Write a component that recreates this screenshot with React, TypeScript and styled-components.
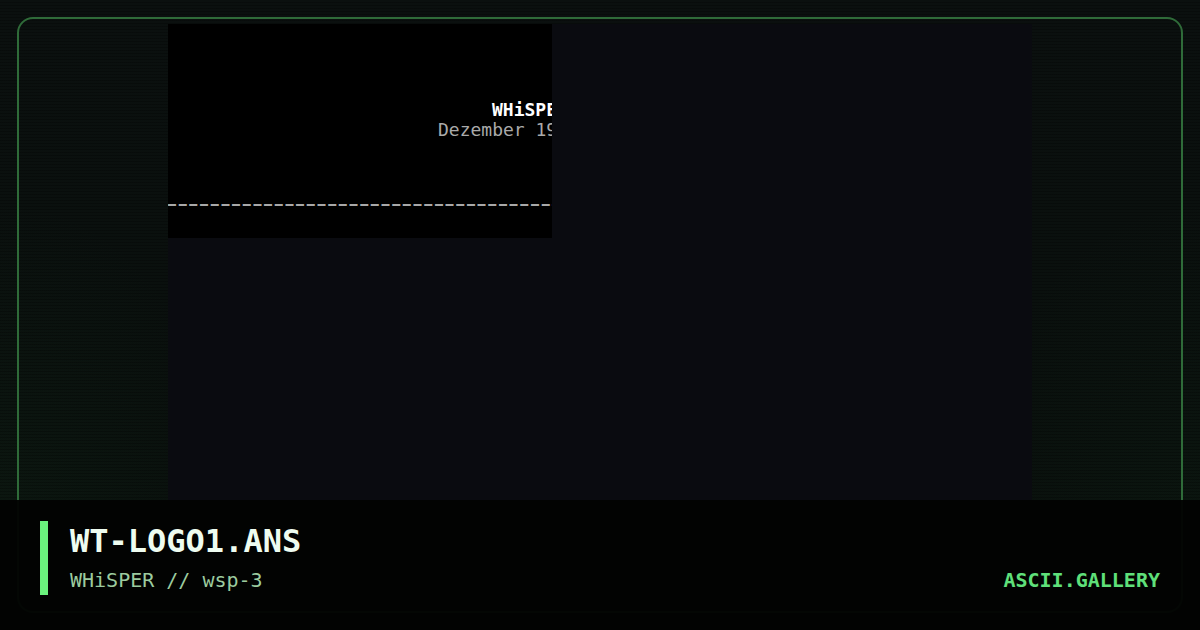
import React from "react";
import styled, { createGlobalStyle } from "styled-components";

const Global = createGlobalStyle`
  html, body { margin: 0; padding: 0; background: #090d0b; }
  * { box-sizing: border-box; }
`;

const Page = styled.div`
  position: relative;
  width: 1200px;
  height: 630px;
  overflow: hidden;
  padding: 17px;
  background:
    repeating-linear-gradient(
      to bottom,
      rgba(0, 0, 0, 0) 0px,
      rgba(0, 0, 0, 0) 2px,
      rgba(0, 0, 0, 0.25) 2px,
      rgba(0, 0, 0, 0.25) 3px
    ),
    radial-gradient(ellipse 240px 340px at 0% 85%, rgba(40, 110, 60, 0.07), rgba(40, 110, 60, 0) 100%),
    radial-gradient(ellipse 240px 340px at 100% 85%, rgba(40, 110, 60, 0.06), rgba(40, 110, 60, 0) 100%),
    linear-gradient(to bottom, #0b100f, #09100c);
  font-family: "DejaVu Sans Mono", "Liberation Mono", monospace;
`;

const Frame = styled.div`
  height: 596px;
  border: 2px solid #2f6b39;
  border-radius: 16px;
  padding-top: 5px;
  display: flex;
  flex-direction: column;
  align-items: center;
  overflow: hidden;
`;

const Viewer = styled.div`
  width: 864px;
  flex: 1;
  background: #0a0b10;
`;

const AnsiCanvas = styled.div`
  width: 384px;
  height: 214px;
  background: #000;
  overflow: hidden;
  white-space: pre;
  font-family: "DejaVu Sans Mono", "Liberation Mono", monospace;
  font-size: 18px;
  line-height: 20px;
  padding-top: 76px;
`;

const AnsiLine = styled.div<{ $indent: number; $color: string; $bold?: boolean }>`
  padding-left: ${(p) => p.$indent}px;
  color: ${(p) => p.$color};
  font-weight: ${(p) => (p.$bold ? 700 : 400)};
`;

const DashRow = styled.div<{ $gap: number }>`
  margin-top: ${(p) => p.$gap}px;
  font-size: 13.3px;
  line-height: 20px;
  letter-spacing: 2.67px;
  color: #a8a8a8;
  text-shadow: 0 0.6px 0 #a8a8a8;
`;

const Caption = styled.div`
  position: absolute;
  left: 0;
  right: 0;
  bottom: 0;
  height: 130px;
  background: rgba(2, 3, 2, 0.96);
  padding: 21px 40px 0 40px;
  display: flex;
  align-items: flex-start;
`;

const CaptionRow = styled.div`
  display: flex;
  flex: 1;
  height: 100%;
`;

const Accent = styled.div`
  width: 8px;
  height: 74px;
  background: #6af27d;
  flex: none;
`;

const TitleBlock = styled.div`
  margin-left: 22px;
  display: flex;
  flex-direction: column;
  flex: 1;
`;

const Title = styled.div`
  font-family: "DejaVu Sans Mono", monospace;
  font-weight: 700;
  font-size: 32px;
  line-height: 40px;
  color: #eefcf0;
`;

const Subtitle = styled.div`
  font-family: "DejaVu Sans Mono", monospace;
  font-size: 20px;
  line-height: 24px;
  margin-top: 7px;
  color: #9ccb9f;
`;

const Brand = styled.div`
  align-self: flex-end;
  margin-bottom: 38px;
  font-family: "DejaVu Sans Mono", monospace;
  font-weight: 700;
  font-size: 20px;
  line-height: 24px;
  color: #5fe07a;
`;

export default function App() {
  const dashes = "–".repeat(40);
  return (
    <>
      <Global />
      <Page>
        <Frame>
          <Viewer>
            <AnsiCanvas>
              <AnsiLine $indent={324} $color="#ffffff" $bold>
                WHiSPER
              </AnsiLine>
              <AnsiLine $indent={270} $color="#aaaaaa">
                Dezember 1996
              </AnsiLine>
              <DashRow $gap={54}>{dashes}</DashRow>
            </AnsiCanvas>
          </Viewer>
        </Frame>
        <Caption>
          <CaptionRow>
            <Accent />
            <TitleBlock>
              <Title>WT-LOGO1.ANS</Title>
              <Subtitle>WHiSPER // wsp-3</Subtitle>
            </TitleBlock>
            <Brand>ASCII.GALLERY</Brand>
          </CaptionRow>
        </Caption>
      </Page>
    </>
  );
}
